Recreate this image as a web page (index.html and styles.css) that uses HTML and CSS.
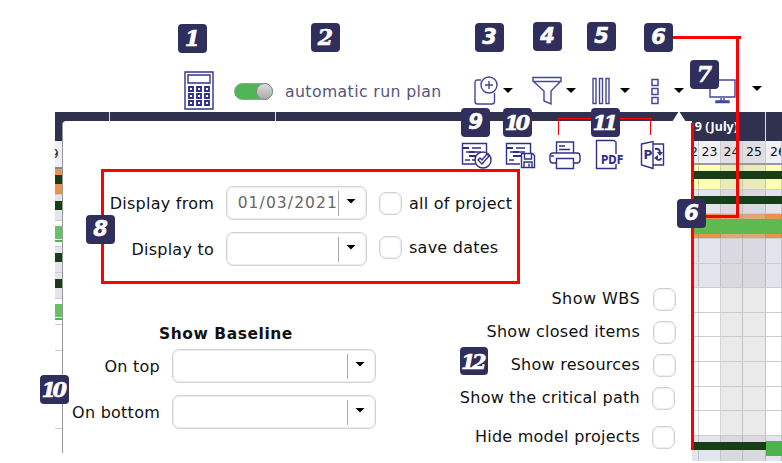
FILE: index.html
```html
<!DOCTYPE html>
<html lang="en">
<head>
<meta charset="utf-8">
<title>Gantt display options</title>
<link rel="stylesheet" href="styles.css">
</head>
<body>
<main class="screen">
  <header class="toolbar">
    <svg class="calc" width="30" height="39" viewBox="0 0 30 39"><path d="M1 1h28v37H1zM4 4h22v8H4z"/><path d="M5 16h4v4H5zM13 16h4v4h-4zM21 16h4v4h-4zM5 23h4v4H5zM13 23h4v4h-4zM21 23h4v4h-4zM5 30h4v4H5zM13 30h4v4h-4zM21 30h4v4h-4z" stroke-width="1.9"/></svg>
    <span class="toggle"><i></i></span>
    <span class="run">automatic run plan</span>
    <svg class="add" width="25" height="30" viewBox="0 0 25 30"><path d="M7 4H3.500Q1 4 1 6.500V25.500Q1 28 3.500 28H18Q20.500 28 20.500 25.500V17"/><circle cx="15" cy="9" r="8"/><path d="M15 5v8M11 9h8"/></svg>
    <i class="arrow a1"></i>
    <svg class="funnel" width="30" height="30" viewBox="0 0 30 30"><path d="M1 1.500h28v4H1zM2 6l10 9v10l7 3V15l9-9"/></svg>
    <i class="arrow a2"></i>
    <svg class="cols" width="18" height="28" viewBox="0 0 18 28"><path d="M1 1.500h3v25H1zM7.500 1.500h3v25h-3zM14 1.500h3v25h-3z"/></svg>
    <i class="arrow a3"></i>
    <svg class="dots" width="8" height="27" viewBox="0 0 8 27"><path d="M1 1.500h6v6H1zM1 10.500h6v6H1zM1 19.500h6v6H1z" stroke-width="1.500"/></svg>
    <i class="arrow a4"></i>
    <svg class="monitor" width="28" height="26" viewBox="0 0 28 26"><path d="M1 1h25v17H1zM12 19v3M15 19v3M7 22h13v1.500H7z"/></svg>
    <i class="arrow a5"></i>
  </header>

  <section class="gantt">
    <div class="months"><span></span><span></span><span class="july">9 (July)</span><span></span></div>
    <div class="chart">
      <div class="left">
        <div class="lday">9</div>
        <div class="lr orange"><b></b></div>
        <div class="lr lav"><b></b></div>
        <div class="lr split"><b></b></div>
        <div class="lr lav"><b></b></div>
        <div class="lr lav"><b></b></div>
        <div class="lr split"><b></b></div>
        <div class="lr"></div><div class="lr"></div><div class="lr"></div><div class="lr"></div>
      </div>
      <div class="right">
        <div class="days"><span>22</span><span>23</span><span class="we">24</span><span class="we">25</span><span>26</span></div>
        <div class="row yellow"><i></i><i></i><i class="we"></i><i class="we"></i><i></i><b></b></div>
        <div class="row lav"><i></i><i></i><i class="we"></i><i class="we"></i><i></i><b></b></div>
        <div class="row orange"><i></i><i></i><i class="we"></i><i class="we"></i><i></i><b class="green"></b></div>
        <div class="row lav"><i></i><i></i><i class="we"></i><i class="we"></i><i></i></div>
        <div class="row lav"><i></i><i></i><i class="we"></i><i class="we"></i><i></i></div>
        <div class="row"><i></i><i></i><i class="we"></i><i class="we"></i><i></i></div>
        <div class="row"><i></i><i></i><i class="we"></i><i class="we"></i><i></i></div>
        <div class="row"><i></i><i></i><i class="we"></i><i class="we"></i><i></i></div>
        <div class="row"><i></i><i></i><i class="we"></i><i class="we"></i><i></i></div>
        <div class="row"><i></i><i></i><i class="we"></i><i class="we"></i><i></i></div>
        <div class="row"><i></i><i></i><i class="we"></i><i class="we"></i><i></i></div>
        <div class="row lav last"><i></i><i></i><i class="we"></i><i class="we"></i><i></i><b></b><b class="green"></b></div>
      </div>
    </div>
  </section>

  <section class="panel">
    <div class="tip"></div>
    <div class="exports">
      <svg class="e1" width="32" height="27" viewBox="0 0 32 27"><path d="M17 22H1.500V1.500h24V12M2 6h6M11 6h9M5 10h6M13 10h7M9 14h7M4 18h5M11 18h5"/><path d="M2 6h6M8 10h6M8 14h8" stroke-width="2.2"/><circle cx="22" cy="18" r="8" fill="#fff"/><path d="M17 18l4 4 7-8-2-2-5 6-2-2z"/></svg>
      <svg class="e2" width="31" height="27" viewBox="0 0 31 27"><path d="M15 22H1.500V1.500h24V12M2 6h6M11 6h9M5 10h6M13 10h7M4 18h5"/><path d="M2 6h6M8 10h6M8 14h8" stroke-width="2.2"/><path d="M16.500 11.500h11l2 2v12h-13zM19.500 12v5h7v-5M19 25v-5h8v5M24 21.500v3" fill="#fff"/></svg>
      <svg class="e3" width="32" height="30" viewBox="0 0 32 30"><path d="M7.500 13V2h17v11M10 6h6M10 9.500h11M7 23H4q-3 0-3-3v-4q0-3 3-3h24q3 0 3 3v4q0 3-3 3h-3M7.500 18.500h17v10h-17zM2 16h3"/></svg>
      <svg class="e4" width="30" height="31" viewBox="0 0 30 31"><path d="M21 15V3L19 1.500H1.500v28H21V25"/><text x="6" y="24.500" textLength="22.500" lengthAdjust="spacingAndGlyphs">PDF</text></svg>
      <svg class="e5" width="26" height="30" viewBox="0 0 26 30"><path d="M1.500 4L13 1.500v27L1.500 25zM13 4h10.500v21H13"/><text x="3.500" y="18.500">P</text><path d="M15 9q5-1 5 4" stroke-width="2"/><path d="M17 12h6l-3 4zM18 15v6l-4-3z" fill="#30308a" stroke="none"/><path d="M21 18q0 2-3 2" stroke-width="1.700"/></svg>
    </div>
    <div class="dates">
      <label class="r1">Display from</label><span class="select">01/03/2021<i class="arrow"></i></span><span class="check"></span><label class="opt">all of project</label>
      <label class="r2">Display to</label><span class="select"><i class="arrow"></i></span><span class="check second"></span><label class="opt second">save dates</label>
    </div>
    <div class="lower">
      <div class="baseline">
        <h2>Show Baseline</h2>
        <label class="b1">On top</label><span class="select"><i class="arrow"></i></span>
        <label class="b2">On bottom</label><span class="select"><i class="arrow"></i></span>
      </div>
      <div class="flags">
        <div><label class="f1">Show WBS</label><span class="check"></span></div>
        <div><label class="f2">Show closed items</label><span class="check"></span></div>
        <div><label class="f3">Show resources</label><span class="check"></span></div>
        <div class="shift"><label class="f4">Show the critical path</label><span class="check"></span></div>
        <div class="shift"><label class="f5">Hide model projects</label><span class="check"></span></div>
      </div>
    </div>
  </section>

  <div class="callouts">
    <i class="line top6"></i><i class="line down6"></i><i class="line in6"></i><i class="line side6"></i><i class="bracket"></i>
    <b class="badge n1">1</b><b class="badge n2">2</b><b class="badge sans n3">3</b><b class="badge sans n4">4</b><b class="badge sans n5">5</b><b class="badge sans n6">6</b><b class="badge n7">7</b><b class="badge sans n8">8</b><b class="badge sans n9">9</b><b class="badge wide n10">10</b><b class="badge wide n11">11</b><b class="badge wide n12">12</b><b class="badge sans n6b">6</b><b class="badge wide n10b">10</b>
  </div>
</main>
</body>
</html>
```
FILE: styles.css
```css
* { box-sizing: border-box; }
body { margin: 0; background: #fff; font-family: "DejaVu Sans", sans-serif; font-size: 16px; color: #111; }
.screen { position: relative; width: 782px; height: 463px; overflow: hidden; }
label, .run, h2 { white-space: nowrap; }
label { letter-spacing: .25px; }
svg { flex: none; fill: none; stroke: #45459a; stroke-width: 1.4; }
svg text { fill: #30308a; stroke: none; font: bold 12px "DejaVu Sans", sans-serif; }

.toolbar { display: flex; align-items: flex-start; height: 112px; padding: 71px 0 0 184px; }
.calc { stroke: #32328c; }
.toggle { flex: none; width: 39px; height: 17px; margin: 12px 0 0 20px; border-radius: 9px; background: #50b556; border: 1px solid #8da98e; }
.toggle i { display: block; width: 17px; height: 17px; margin: -1px -1px 0 auto; border-radius: 50%; background: linear-gradient(#ddd, #aaa); border: 1px solid #888; }
.run { width: 157px; margin: 11px 0 0 12px; line-height: 20px; color: #55557d; font-size: 15.7px; letter-spacing: .4px; }
.arrow { flex: none; display: block; width: 10px; height: 5px; background: #000; clip-path: polygon(0 0, 100% 0, 50% 100%); }
.add { margin: 5px 0 0 32px; }
.funnel { margin: 5px 0 0 19px; }
.cols { margin: 6px 0 0 16px; }
.dots { margin: 7px 0 0 21px; }
.monitor { margin: 8px 0 0 25px; }
.a1 { margin: 17px 0 0 4px; }
.a2 { margin: 17px 0 0 4px; }
.a3 { margin: 17px 0 0 10px; }
.a4 { margin: 17px 0 0 15px; }
.a5 { margin: 15px 0 0 15px; }

.gantt { margin-left: 55px; }
.months { display: grid; grid-template-columns: 54px 166px 490px 17px; height: 29px; background: #30304f; }
.months span + span { border-left: 1px solid #ddd; }
.july { padding: 6px 27px 0 0; text-align: right; color: #fff; font: bold 12.5px/17px "Noto Sans", sans-serif; }
.chart { display: flex; justify-content: space-between; }
.left { width: 8px; overflow: hidden; }
.lday { height: 28px; border-bottom: 2px solid #888; background: #eeeef5; font-size: 12px; line-height: 26px; text-indent: -4px; }
.lr { height: 26px; border-bottom: 1px solid #ccc; padding-top: 6px; }
.lr b { display: block; height: 9px; background: #173f17; }
.lr.orange, .row.orange { background: #ed914e; }
.lav { background: #e4e4ee; }
.lr.split { padding-top: 5px; }
.lr.split b { height: 13px; background: #62c462; box-shadow: 0 1px #fff, 0 3px #4ab94a; }
.right { width: 90px; }
.days, .row { display: grid; grid-template-columns: 7px 22px 22px 23px 16px; }
.days { height: 24px; background: #f0f0f6; border-bottom: 2px solid #999; font-size: 12.500px; line-height: 22px; color: #111; }
.days span { overflow: hidden; text-align: center; border-right: 1px solid #ccc; }
.days span:first-child { direction: rtl; }
.days span:last-child { text-indent: 4px; text-align: left; }
.days .we { background: #dfdfe3; }
.row { position: relative; height: 24.65px; border-bottom: 1px solid #ccc; }
.row i { border-right: 1px solid rgba(100, 100, 110, .27); }
.row .we { background: rgba(200, 200, 200, .38); }
.row b { position: absolute; left: 0; right: 0; top: 6px; height: 8px; background: #173f17; }
.row b.green { top: 4.5px; height: 15px; background: #5eb950; }
.yellow { background: #ffffb5; }
.row.last { border: 0; }
.row.last b { right: 16px; }
.row.last b.green { left: 74px; right: 0; background: #4eb24e; }

.panel { position: absolute; left: 62px; top: 121px; width: 630px; height: 332px; background: #fff; border-left: 1px solid #999; border-radius: 4px 0 0 0; }
.tip { position: absolute; left: 609px; top: -10px; width: 14px; height: 11px; background: #fff; clip-path: polygon(50% 0, 100% 100%, 0 100%); }
.exports { display: flex; height: 48px; padding: 18px 0 0 398px; }
.exports svg { stroke: #30308a; }
.e1 { margin-top: 3px; }
.e2 { margin: 3px 0 0 12px; }
.e3 { margin: 1px 0 0 13px; }
.e4 { margin: 0 0 0 14px; }
.e5 { margin: 1px 0 0 15px; }
.dates { display: grid; grid-template: 34px 34px / 110px 141px 22px 1fr; column-gap: 12px; row-gap: 12px; align-items: center; width: 419px; height: 115px; margin-left: 38px; padding-top: 14px; border: 3px solid #f00; align-content: start; }
.dates > label:nth-child(4n+1) { justify-self: end; }
.dates .opt { margin-left: -4px; }
.dates .second { transform: translateY(-2px); }
.select { display: flex; align-items: center; justify-content: flex-end; height: 34px; border: 1px solid #d3d3d3; box-shadow: inset 0 0 0 1px #eee; border-radius: 7px; color: #666; font-size: 15.5px; letter-spacing: 1.1px; background: linear-gradient(#aaa, #aaa) right 27px center / 1px 25px no-repeat; }
.select .arrow { margin: -4px 10px 0 8px; }
.check { display: block; width: 23px; height: 23px; border: 1px solid #d3d3d3; box-shadow: inset 0 0 0 1px #eee; border-radius: 7px; background: #fff; }
.lower { display: flex; }
.baseline { display: grid; grid-template: 25px 34px 34px / 97px 204px; column-gap: 12px; row-gap: 12px; width: 313px; padding-top: 28px; align-content: start; align-items: center; }
.baseline h2 { grid-column: 1 / -1; margin: 19px 0 0 96px; font-size: 15.5px; line-height: 20px; letter-spacing: .55px; }
.baseline label { justify-self: end; }
.flags { width: 300px; padding-top: 4px; }
.flags div { display: flex; justify-content: flex-end; align-items: center; gap: 13px; height: 23px; margin-bottom: 10px; }
.flags label { line-height: 20px; margin-top: -2px; }
.flags .f1 { letter-spacing: .45px; }
.flags .shift { padding-right: 1px; gap: 12px; }
.flags .shift + .shift { margin-top: 16px; }

.line, .bracket { position: absolute; background: #f00; }
.top6 { left: 673px; top: 36px; width: 68px; height: 3px; }
.down6 { left: 736px; top: 36px; width: 3px; height: 181px; }
.in6 { left: 706px; top: 215px; width: 33px; height: 3px; }
.side6 { left: 691px; top: 123px; width: 3px; height: 327px; }
.bracket { left: 558px; top: 118px; width: 93px; height: 17px; background: none; border: 1px solid #f00; border-bottom: 0; }
.badge { position: absolute; width: 29px; height: 29px; border-radius: 4px; background: #302e5c; color: #fff; font: italic bold 22px/29px "DejaVu Serif", serif; text-align: center; -webkit-text-stroke: .6px #fff; }
.badge.sans { font-family: "DejaVu Sans", sans-serif; font-size: 21px; }
.badge.wide { letter-spacing: -3.5px; text-indent: -4px; font-size: 21px; }
.n1 { left: 178px; top: 24px; }
.n2 { left: 311px; top: 23px; }
.n3 { left: 475px; top: 23px; }
.n4 { left: 533px; top: 22px; }
.n5 { left: 587px; top: 22px; }
.n6 { left: 644px; top: 23px; }
.n7 { left: 690px; top: 60px; }
.n8 { left: 86px; top: 215px; }
.n9 { left: 461px; top: 108px; }
.n10 { left: 503px; top: 108px; }
.n11 { left: 591px; top: 108px; }
.n12 { left: 460px; top: 347px; height: 28px; width: 28px; }
.n6b { left: 677px; top: 199px; }
.n10b { left: 40px; top: 375px; }
```
